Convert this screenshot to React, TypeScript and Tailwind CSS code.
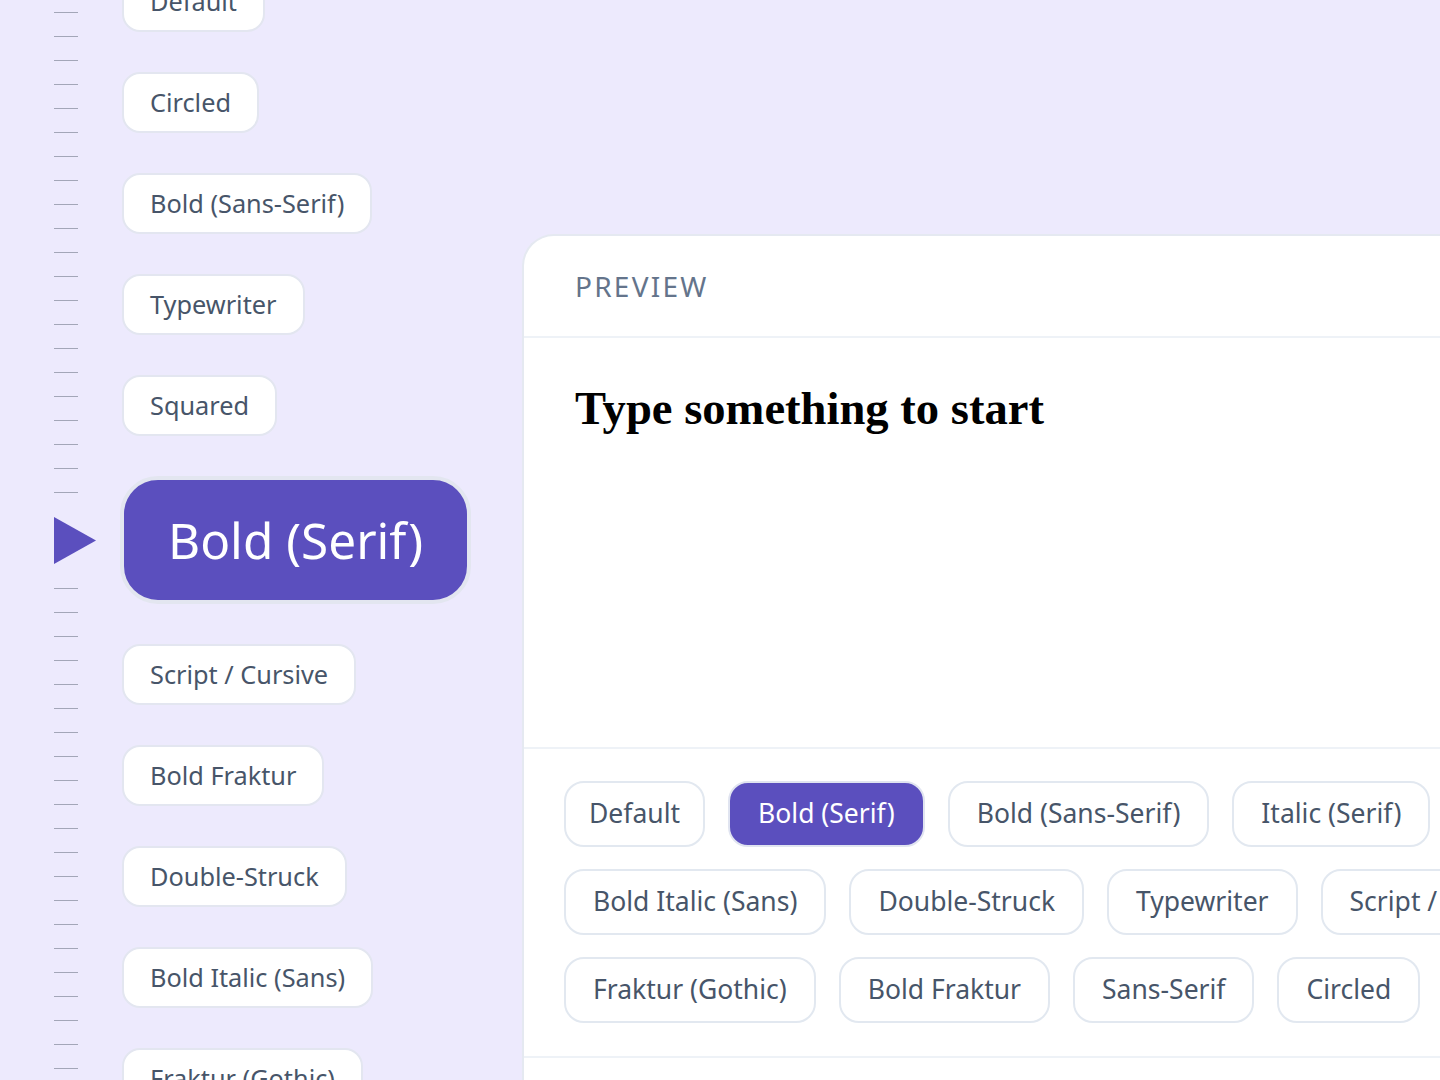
import React from 'react';

const leftStyles = [
  'Default',
  'Circled',
  'Bold (Sans-Serif)',
  'Typewriter',
  'Squared',
  'Bold (Serif)',
  'Script / Cursive',
  'Bold Fraktur',
  'Double-Struck',
  'Bold Italic (Sans)',
  'Fraktur (Gothic)',
];

const chipRows = [
  ['Default', 'Bold (Serif)', 'Bold (Sans-Serif)', 'Italic (Serif)'],
  ['Bold Italic (Sans)', 'Double-Struck', 'Typewriter', 'Script / Cursive'],
  ['Fraktur (Gothic)', 'Bold Fraktur', 'Sans-Serif', 'Circled', 'Squared'],
];

const active = 'Bold (Serif)';

function Ticks() {
  return (
    <div className="flex flex-col">
      {Array.from({ length: 21 }).map((_, i) => (
        <div key={i} className="h-6 flex items-center">
          <div className="h-px w-6 bg-[#a3a6b8]" />
        </div>
      ))}
    </div>
  );
}

export default function App() {
  return (
    <div
      className="flex h-[1080px] w-[1440px] overflow-hidden bg-[#edeafd]"
      style={{ fontFamily: '"Noto Sans", "Open Sans", sans-serif' }}
    >
      {/* scroll ruler */}
      <div className="w-[122px] shrink-0 flex flex-col pl-[54px]">
        <Ticks />
        <div className="h-[77px] flex items-center">
          <svg width="42" height="47" viewBox="0 0 42 47">
            <polygon points="0,0 42,23.5 0,47" fill="#5b4fbe" />
          </svg>
        </div>
        <Ticks />
      </div>

      {/* style wheel */}
      <div className="w-[400px] shrink-0 h-full flex flex-col justify-center items-start gap-10">
        {leftStyles.map((s) =>
          s === active ? (
            <div
              key={s}
              className="shrink-0 h-[128px] -ml-[2px] flex items-center px-[44px] rounded-[38px] border-4 border-[#e3e6f0] bg-[#5b4fbe] text-[49.5px] text-white"
            >
              {s}
            </div>
          ) : (
            <div
              key={s}
              className="shrink-0 h-[61px] flex items-center px-[26px] rounded-[18px] border-2 border-[#e3e6f0] bg-white text-[25.3px] text-[#475569]"
            >
              {s}
            </div>
          )
        )}
      </div>

      {/* preview card */}
      <div className="mt-[234px] w-[1000px] shrink-0 flex flex-col bg-white border-2 border-r-0 border-b-0 border-[#e5e9f1] rounded-tl-[32px]">
        <div className="h-[102px] shrink-0 flex items-center px-[51px] border-b-2 border-[#eef2f7]">
          <span className="text-[28px] tracking-[0.08em] text-[#64748b]">PREVIEW</span>
        </div>
        <div className="h-[409px] shrink-0 px-[51px] pt-[47px]">
          <p
            className="text-[46.6px] font-bold text-black leading-none"
            style={{ fontFamily: '"Liberation Serif", serif' }}
          >
            Type something to start
          </p>
        </div>
        <div className="shrink-0 flex flex-col gap-[22px] pl-[40px] pt-[32px] pb-[33px] border-y-2 border-[#eef2f7]">
          {chipRows.map((row, i) => (
            <div key={i} className="flex gap-[23px]">
              {row.map((c) =>
                c === active ? (
                  <div
                    key={c}
                    className="shrink-0 h-[66px] flex items-center px-[28px] rounded-[20px] border-2 border-[#e0e4f0] bg-[#5b4fbe] text-[26.5px] text-white"
                  >
                    {c}
                  </div>
                ) : (
                  <div
                    key={c}
                    className={
                      'shrink-0 h-[66px] flex items-center rounded-[20px] border-2 border-[#e2e8f0] bg-white text-[26.5px] text-[#475569] ' +
                      (c === 'Default' ? 'px-[23px]' : 'px-[27px]')
                    }
                  >
                    {c}
                  </div>
                )
              )}
            </div>
          ))}
        </div>
      </div>
    </div>
  );
}
